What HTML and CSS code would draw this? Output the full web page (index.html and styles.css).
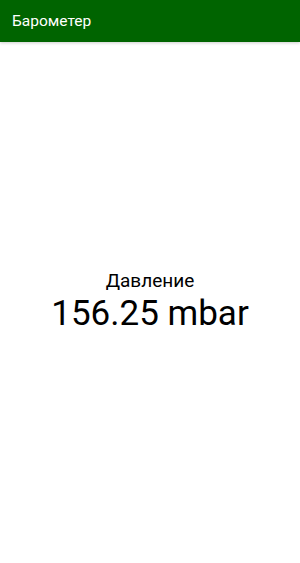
FILE: index.html
```html
<!DOCTYPE html>
<html>
<head>
<meta charset="utf-8">
<link rel="stylesheet" href="styles.css">
</head>
<body>
<div class="app">
  <header class="appbar">Барометер</header>
  <main class="content">
    <div class="label">Давление</div>
    <div class="value">156.25 mbar</div>
  </main>
</div>
</body>
</html>
```
FILE: styles.css
```css
html, body { margin: 0; padding: 0; }
body { font-family: Roboto, "Noto Sans", sans-serif; background: #fff; color: #000; }
.app { display: flex; flex-direction: column; height: 563px; }
.appbar {
  height: 42px;
  background: #006400;
  color: #fff;
  font-size: 15.5px;
  display: flex;
  align-items: center;
  padding-left: 12px;
  flex-shrink: 0;
  box-shadow: 0 1px 3px rgba(0,0,0,0.2);
}
.content {
  flex: 1;
  display: flex;
  flex-direction: column;
  align-items: center;
  justify-content: center;
}
.label { font-size: 19px; line-height: 22px; }
.value { font-size: 35px; line-height: 44px; }
```
